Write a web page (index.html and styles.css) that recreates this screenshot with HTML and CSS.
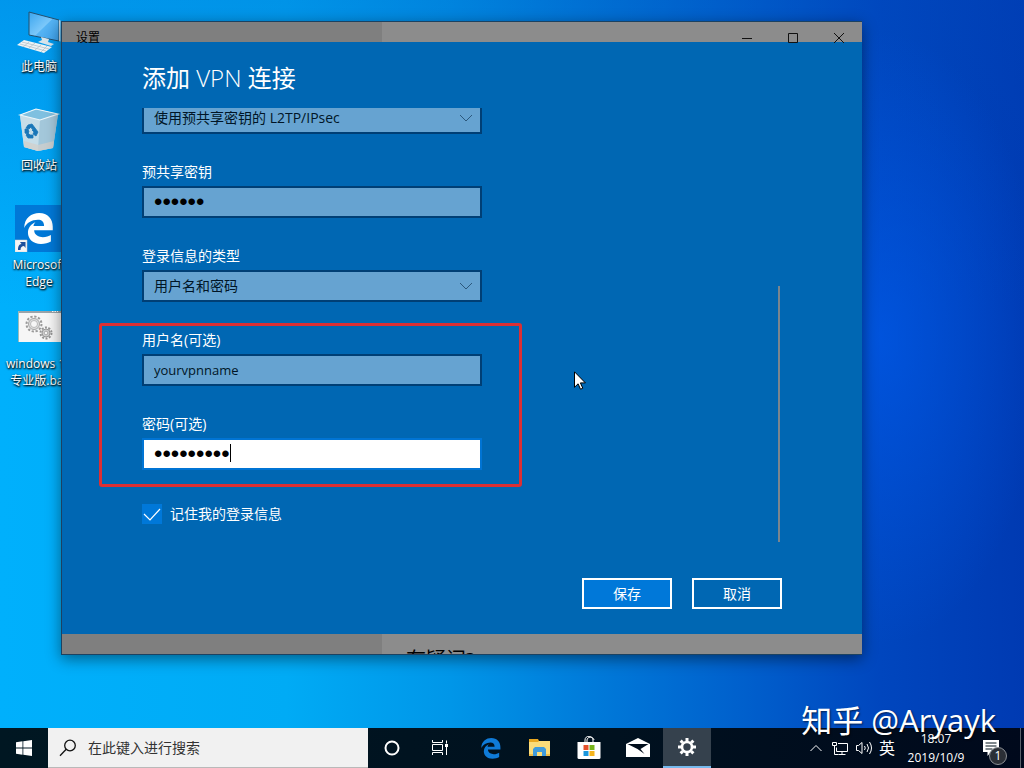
FILE: index.html
```html
<!DOCTYPE html>
<html lang="zh-CN">
<head>
<meta charset="utf-8">
<title>设置</title>
<link rel="stylesheet" href="styles.css">
</head>
<body>
<div class="screen">
  <main class="desktop">
    <ul class="shortcuts">
      <li class="shortcut">
        <svg class="shortcut-icon" viewBox="0 0 48 48" aria-hidden="true">
          <defs><linearGradient id="scr" x1="0" y1="0" x2="1" y2="1"><stop offset="0" stop-color="#3aa5ee"/><stop offset=".5" stop-color="#7cc8fa"/><stop offset=".52" stop-color="#56b4f4"/><stop offset="1" stop-color="#3b9fea"/></linearGradient></defs>
          <path d="M14 6l30 8v21l-30-6z" fill="url(#scr)" stroke="#23506f" stroke-width="1"/>
          <path d="M44 14l1.500 .5v21l-1.500-.5z" fill="#c9dbe6"/>
          <path d="M26 31l8 2-1 3 6 2-3 2-13-4 4-2z" fill="#d7e4ea"/>
          <path d="M9 34l28 7-8 6-27-8z" fill="#eef3f5"/>
          <path d="M7 36l27 7M5 38l26 7M14 36l-6 5M20 37l-6 5M26 39l-6 5M32 40l-6 6" stroke="#aebcc4" stroke-width=".7"/>
        </svg>
        <span class="shortcut-label">此电脑</span>
      </li>
      <li class="shortcut">
        <svg class="shortcut-icon" viewBox="0 0 48 48" aria-hidden="true">
          <path d="M5 10L21 4l22 5-5 34-15 3-14-4z" fill="#b9d9ea"/>
          <path d="M5 10l20 5-2 31-14-4z" fill="#c6dde8"/>
          <path d="M25 15l18-6-5 34-15 3z" fill="#a3c7da"/>
          <path d="M5 10L21 4l22 5-18 6z" fill="#7fc0e0" stroke="#eef7fb" stroke-width="1.200"/>
          <path d="M9 36l14 4 16-4-1 7-15 3-14-4z" fill="#d2cfcb" opacity=".75"/>
          <path d="M13 20l4-1 3 4-3 1-1-2-2 2-3-1zM20 23l3 4-2 4-3-2 1-2-2-2zM18 33l-5 0-2-3 2-2 2 2 3 0zM10 28l0-4 3 0 1 3-2 2z" fill="#1976b8" stroke="#1976b8" stroke-width=".8"/>
        </svg>
        <span class="shortcut-label">回收站</span>
      </li>
      <li class="shortcut">
        <svg class="shortcut-icon" viewBox="0 0 48 48" aria-hidden="true">
          <path d="M0 1h48v48H0z" fill="#0078d7"/>
          <g transform="translate(8 9) scale(1.240)"><path d="M1 12C1 4 7 0 13 0c7 0 11 5 11 11v3H9c0 4 4 5.500 7 5.500 2.500 0 5-.8 6.500-1.800v5.300c-2 1.200-5 2-8 2C8 25 4 21 4 16c0-4 2.500-7 6-8.500C9 8.700 8.500 9.500 8.500 10.500H17C17 7 15 5.500 12 5.500 7 5.500 3 8 1 12z" fill="#fff"/></g>
          <path d="M0 36h12v12H0z" fill="#f5f5f5" stroke="#ccc" stroke-width=".5"/>
          <path d="M3 46c0-4 1-5.500 3.500-6L5 38h5.500v6L9 42c-2 0-3.500 1-3.500 4z" fill="#1d4f9c"/>
        </svg>
        <span class="shortcut-label">Microsoft<br>Edge</span>
      </li>
      <li class="shortcut">
        <svg class="shortcut-icon" viewBox="0 0 48 48" aria-hidden="true">
          <path d="M4 9h42v30H4z" fill="#f6f6f6"/><path d="M4 8h42v2H4z" fill="#9aa4aa"/>
          <path d="M3.500 8v31" stroke="#9bb" stroke-width="1"/><path d="M37 8.500h6" stroke="#fff" stroke-dasharray="1.500 1"/>
          <circle cx="19" cy="21" r="7.500" fill="none" stroke="#9a9a9a" stroke-width="2" stroke-dasharray="2.300 1.627"/>
          <circle cx="19" cy="21" r="5.500" fill="#dedede" stroke="#a5a5a5" stroke-width="1"/><circle cx="19" cy="21" r="3.500" fill="#f6f6f6" stroke="#a5a5a5" stroke-width=".7"/>
          <circle cx="31" cy="30" r="5.500" fill="none" stroke="#949494" stroke-width="2" stroke-dasharray="2 1.456"/>
          <circle cx="31" cy="30" r="4" fill="#cfcfcf" stroke="#999"/><circle cx="31" cy="30" r="1.800" fill="#f6f6f6" stroke="#999" stroke-width=".7"/>
        </svg>
        <span class="shortcut-label">windows 10<br>专业版.bat</span>
      </li>
    </ul>

    <section class="window" aria-label="设置">
      <header class="titlebar">
        <span class="titlebar-name">设置</span>
        <button class="caption" type="button" aria-label="最小化"><svg class="caption-icon" viewBox="0 0 12 12"><path d="M1 6.500h10"/></svg></button>
        <button class="caption" type="button" aria-label="最大化"><svg class="caption-icon" viewBox="0 0 12 12"><path d="M1.500 1.500h9v9h-9z"/></svg></button>
        <button class="caption" type="button" aria-label="关闭"><svg class="caption-icon" viewBox="0 0 12 12"><path d="M1 1l10 10M11 1L1 11"/></svg></button>
      </header>

      <form class="dialog">
        <h1 class="dialog-title">添加 <span class="latin">VPN</span> 连接</h1>
        <div class="scroller">
          <div class="fields">
            <div class="picker">
              <select class="control" aria-label="VPN 类型"><option>使用预共享密钥的 L2TP/IPsec</option></select>
              <svg class="chevron" viewBox="0 0 12 8" aria-hidden="true"><path d="M0 1l6 6 6-6"/></svg>
            </div>
            <div class="field">
              <label for="psk">预共享密钥</label>
              <input class="control secret" id="psk" type="password" value="secret">
            </div>
            <div class="field">
              <label for="kind">登录信息的类型</label>
              <div class="picker">
                <select class="control" id="kind"><option>用户名和密码</option></select>
                <svg class="chevron" viewBox="0 0 12 8" aria-hidden="true"><path d="M0 1l6 6 6-6"/></svg>
              </div>
            </div>
            <div class="credentials">
              <div class="field">
                <label for="user">用户名(可选)</label>
                <input class="control plain" id="user" type="text" value="yourvpnname">
              </div>
              <div class="field">
                <label for="pass">密码(可选)</label>
                <div class="picker">
                  <input class="control secret active" id="pass" type="password" value="password1">
                  <span class="caret"></span>
                </div>
              </div>
              <div class="highlight"></div>
            </div>
            <label class="remember"><input class="check" type="checkbox" checked>记住我的登录信息</label>
          </div>
          <div class="scrollbar"></div>
        </div>
        <div class="actions">
          <button class="action primary" type="button">保存</button>
          <button class="action" type="button">取消</button>
        </div>
      </form>
      <div class="underlay">有疑问?</div>
    </section>

    <svg class="pointer" viewBox="0 0 12 19" aria-hidden="true"><path d="M.5 .8v15.500l3.600-3.500 2.400 5.400 2.300-1-2.400-5.300h5z" fill="#fff" stroke="#000"/></svg>
  </main>

  <footer class="taskbar">
    <button class="task" type="button" aria-label="开始"><svg class="task-icon" viewBox="0 0 24 24"><path d="M4 6.300l6.500-1v6.300H4zM11.300 5.200L20 4v7.600h-8.700zM4 12.400h6.500v6.300L4 17.700zM11.300 12.400H20V20l-8.700-1.200z" fill="#fff"/></svg></button>
    <label class="search">
      <svg class="search-icon" viewBox="0 0 18 18" aria-hidden="true"><circle cx="11" cy="6.500" r="5.300"/><path d="M7.200 10.300L1 16.700"/></svg>
      <input class="search-box" type="text" placeholder="在此键入进行搜索" aria-label="搜索">
    </label>
    <button class="task" type="button" aria-label="Cortana"><svg class="task-icon" viewBox="0 0 24 24"><circle cx="12" cy="12" r="6.500" fill="none" stroke="#fff" stroke-width="2"/></svg></button>
    <button class="task" type="button" aria-label="任务视图"><svg class="task-icon" viewBox="0 0 24 24"><path d="M4.500 4v2.500h10V4M4.500 19v-2.500h10V19M4.500 8.500h10v6h-10zM18.500 4.500v3M18.500 11v8" fill="none" stroke="#fff"/><path d="M17 8h3v3h-3z" fill="#fff"/></svg></button>
    <nav class="apps">
      <button class="task" type="button" aria-label="Edge"><svg class="task-icon" viewBox="0 0 24 24"><path transform="translate(1.500 2) scale(.83)" d="M1 12C1 4 7 0 13 0c7 0 11 5 11 11v3H9c0 4 4 5.500 7 5.500 2.500 0 5-.8 6.500-1.800v5.300c-2 1.200-5 2-8 2C8 25 4 21 4 16c0-4 2.500-7 6-8.500C9 8.700 8.500 9.500 8.500 10.500H17C17 7 15 5.500 12 5.500 7 5.500 3 8 1 12z" fill="#0f7bd8"/></svg></button>
      <button class="task" type="button" aria-label="文件资源管理器"><svg class="task-icon" viewBox="0 0 24 24"><path d="M1 3h9l1 2h11v3H1z" fill="#e9a820"/><path d="M1 6h9l1-1h11v15H1z" fill="#fbdc79"/><path d="M5 20v-7l2-2h9l2 2v7h-4v-4H9v4z" fill="#3f9bdc"/><path d="M1 20h4v-2H1zM18 20h4v-2h-4z" fill="#edbd4b"/></svg></button>
      <button class="task" type="button" aria-label="Microsoft Store"><svg class="task-icon" viewBox="0 0 24 24"><path d="M8 6V4c0-5 8-5 8 0v2M10 6V4c0-4 7-3 7 0" fill="none" stroke="#fff" stroke-width="1"/><path d="M.5 6h23v15.500q0 1.500-1.500 1.500H2Q.5 23 .5 21.500z" fill="#fff"/><path d="M6.500 9h5v5h-5z" fill="#e5512b"/><path d="M12.500 9h5v5h-5z" fill="#78b51c"/><path d="M6.500 15h5v5h-5z" fill="#1a96dc"/><path d="M12.500 15h5v5h-5z" fill="#f6b51d"/></svg></button>
      <button class="task" type="button" aria-label="邮件"><svg class="task-icon" viewBox="0 0 24 24"><path d="M0 8L12 2l12 6v13H0z" fill="#fff"/><path d="M1.500 8h21l-8 5 4 5-7-5z" fill="#000d1b"/></svg></button>
      <button class="task current" type="button" aria-label="设置"><svg class="task-icon" viewBox="0 0 24 24"><circle cx="12" cy="12" r="5" fill="none" stroke="#fff" stroke-width="2.600"/><path d="M12 3v3M12 18v3M3 12h3M18 12h3M5.600 5.600l2.200 2.200M16.200 16.200l2.200 2.200M5.600 18.400l2.200-2.200M16.200 7.800l2.200-2.200" stroke="#fff" stroke-width="3"/></svg></button>
    </nav>
    <div class="tray">
      <svg class="tray-icon" viewBox="0 0 18 18"><path d="M3.500 12L9 6.500l5.500 5.500"/></svg>
      <svg class="tray-icon" viewBox="0 0 18 18"><path d="M7 4.500h9.500v8H5.500V8.500M11 12.500v3M7.500 15.500h7M1.500 3.500h4v3h-4zM3.500 6.500v9h4"/></svg>
      <svg class="tray-icon" viewBox="0 0 18 18"><path d="M1.500 6.500h2L7 3.500v11l-3.500-3h-2zM9.500 7q1.500 2 0 4M12 5q3 4 0 8M14.500 3q4 6 0 12"/></svg>
      <span class="ime">英</span>
      <time class="clock">18:07<br>2019/10/9</time>
      <button class="notices" type="button" aria-label="通知">
        <svg class="notice-icon" viewBox="0 0 16 16"><path d="M0 0h16v12H8l-3.500 4v-4H0z" fill="#fff"/><path d="M2.500 3h11M2.500 6h11M2.500 9h7" stroke="#00101a"/></svg>
        <span class="badge">1</span>
      </button>
    </div>
  </footer>
  <div class="watermark">知乎 @Aryayk</div>
</div>
</body>
</html>
```
FILE: styles.css
```css
* {
  box-sizing: border-box;
}

body {
  margin: 0;
  font: 14px/20px "Open Sans", "Noto Sans CJK SC", sans-serif;
  color: #fff;
}

button,
input,
select {
  font: inherit;
  color: inherit;
  margin: 0;
}

.screen {
  position: relative;
  display: flex;
  flex-direction: column;
  height: 100vh;
  overflow: hidden;
  background:
    radial-gradient(ellipse 16% 40% at 86% 44%, rgba(0, 92, 240, 0.6), transparent),
    linear-gradient(180deg, rgba(0, 76, 190, 0.25), transparent 40%),
    linear-gradient(90deg, #00b0fc 0%, #00abf5 28%, #0096e8 44%, #0078d8 59%, #005fcc 73%, #0046be 86%, #003ab2 100%);
}

.desktop {
  position: relative;
  flex: 1;
  min-height: 0;
}

.shortcuts {
  display: grid;
  grid-auto-rows: 99px;
  width: 78px;
  margin: 0;
  padding: 6px 0 0;
  list-style: none;
}

.shortcut {
  display: flex;
  flex-direction: column;
  align-items: center;
  gap: 4px;
}

.shortcut-icon {
  flex: none;
  width: 48px;
  height: 48px;
}

.shortcut-label {
  font-size: 12px;
  line-height: 17px;
  text-align: center;
  white-space: nowrap;
  text-shadow: 1px 1px 2px #000, 0 1px 2px rgba(0, 0, 0, 0.8);
}

.window {
  position: absolute;
  inset: 21px 162px 73px 61px;
  display: flex;
  flex-direction: column;
  padding-top: 20px;
  border: 1px solid #1c4261;
  border-right-width: 0;
  background: linear-gradient(90deg, #7f7f7f 320px, #8c8c8c 320px);
  box-shadow: 0 4px 14px rgba(0, 0, 0, 0.45);
  overflow: hidden;
}

.titlebar {
  position: absolute;
  inset: 0 0 auto;
  display: flex;
  align-items: center;
  height: 32px;
  color: #000;
}

.titlebar-name {
  flex: 1;
  padding-left: 14px;
  font-size: 12px;
}

.caption {
  display: grid;
  place-items: center;
  width: 46px;
  height: 32px;
  padding: 0;
  border: 0;
  background: none;
}

.caption-icon {
  width: 12px;
  height: 12px;
  fill: none;
  stroke: #111;
}

.dialog {
  flex: 1;
  min-height: 0;
  display: flex;
  flex-direction: column;
  background: #0067b3;
}

.dialog-title {
  margin: 0;
  padding: 20px 80px 14px;
  font-size: 24px;
  line-height: 32px;
  font-weight: 400;
}

.latin {
  font-weight: 300;
}

.scroller {
  flex: 1;
  min-height: 0;
  display: flex;
  justify-content: space-between;
  align-items: flex-start;
  padding: 0 82px 0 80px;
  overflow: hidden;
}

.fields {
  display: flex;
  flex-direction: column;
  gap: 28px;
  width: 340px;
  margin-top: -6px;
}

.scrollbar {
  align-self: flex-end;
  width: 2px;
  height: 256px;
  background: #7a858e;
}

.field {
  display: flex;
  flex-direction: column;
  gap: 4px;
}

.picker {
  position: relative;
}

.control {
  display: block;
  width: 100%;
  height: 32px;
  padding: 0 10px;
  border: 2px solid #003f75;
  border-radius: 0;
  outline: 0;
  background: #66a3d1;
  color: #001526;
  appearance: none;
}

.plain {
  font-size: 13px;
}

.secret {
  font-family: "Liberation Sans", sans-serif;
  font-size: 24px;
  color: #000;
}

.control.active {
  border-color: #0074d4;
  background: #fff;
}

.chevron {
  position: absolute;
  top: 12px;
  right: 10px;
  width: 12px;
  height: 8px;
  fill: none;
  stroke: #2c587c;
}

.caret {
  position: absolute;
  top: 6px;
  left: 88px;
  width: 1px;
  height: 18px;
  background: #000;
}

.credentials {
  position: relative;
  display: flex;
  flex-direction: column;
  gap: 28px;
}

.highlight {
  position: absolute;
  inset: -7px -40px -17px -43px;
  border: 3px solid #dc2f34;
  border-radius: 3px;
  pointer-events: none;
}

.remember {
  display: flex;
  align-items: center;
  gap: 8px;
  padding-top: 6px;
}

.check {
  width: 20px;
  height: 20px;
  appearance: none;
  background: #0078d9 url("data:image/svg+xml,%3Csvg xmlns='http://www.w3.org/2000/svg' viewBox='0 0 20 20'%3E%3Cpath d='M2 10l6 6L18 5' fill='none' stroke='white' stroke-width='1.200'/%3E%3C/svg%3E");
}

.actions {
  display: flex;
  justify-content: flex-end;
  gap: 20px;
  padding: 36px 80px 25px;
}

.action {
  width: 90px;
  height: 31px;
  padding: 0;
  border: 2px solid #fff;
  background: none;
}

.action.primary {
  background: #0078d9;
}

.underlay {
  height: 20px;
  padding: 12px 0 0 344px;
  color: #000;
  font-size: 20px;
  line-height: 28px;
  overflow: hidden;
}

.pointer {
  position: absolute;
  top: 371px;
  left: 574px;
  width: 12px;
  height: 19px;
}

.taskbar {
  display: flex;
  height: 40px;
  background: linear-gradient(90deg, #001722, #00111f 60%, #00091c);
}

.task {
  display: grid;
  place-items: center;
  width: 48px;
  height: 40px;
  padding: 0;
  border: 0;
  background: none;
}

.task-icon {
  width: 24px;
  height: 24px;
}

.task.current {
  background: #35414d;
  border-bottom: 2px solid #76b9ed;
}

.search {
  display: flex;
  align-items: center;
  gap: 11px;
  width: 320px;
  padding: 0 12px 0 11px;
  background: #f1f1f1;
  border-bottom: 1px solid #b9b9b9;
}

.search-icon {
  width: 18px;
  height: 18px;
  fill: none;
  stroke: #111;
  stroke-width: 1.300;
}

.search-box {
  flex: 1;
  min-width: 0;
  padding: 0;
  border: 0;
  outline: 0;
  background: none;
}

.search-box::placeholder {
  color: #333;
  opacity: 1;
}

.apps {
  display: flex;
  gap: 1px;
  padding-left: 3px;
}

.tray {
  display: flex;
  align-items: center;
  gap: 6px;
  margin-left: auto;
  margin-right: 3px;
  border-right: 1px solid #59616b;
}

.tray-icon {
  width: 18px;
  height: 18px;
  fill: none;
  stroke: #fff;
}

.ime {
  font-size: 16px;
}

.clock {
  width: 70px;
  font-size: 12px;
  line-height: 19px;
  text-align: center;
}

.notices {
  position: relative;
  width: 43px;
  height: 40px;
  padding: 0 6px;
  border: 0;
  background: none;
}

.notice-icon {
  display: block;
  width: 16px;
  height: 16px;
}

.badge {
  position: absolute;
  top: 19px;
  left: 12px;
  width: 18px;
  height: 18px;
  border: 1px solid #8b8f94;
  border-radius: 50%;
  background: #2b2f36;
  font-size: 12px;
  line-height: 16px;
  text-align: center;
}

.watermark {
  position: absolute;
  right: 28px;
  bottom: 28px;
  font-size: 31px;
  line-height: 40px;
  text-shadow: 1px 1px 2px rgba(0, 0, 0, 0.6);
}
```
